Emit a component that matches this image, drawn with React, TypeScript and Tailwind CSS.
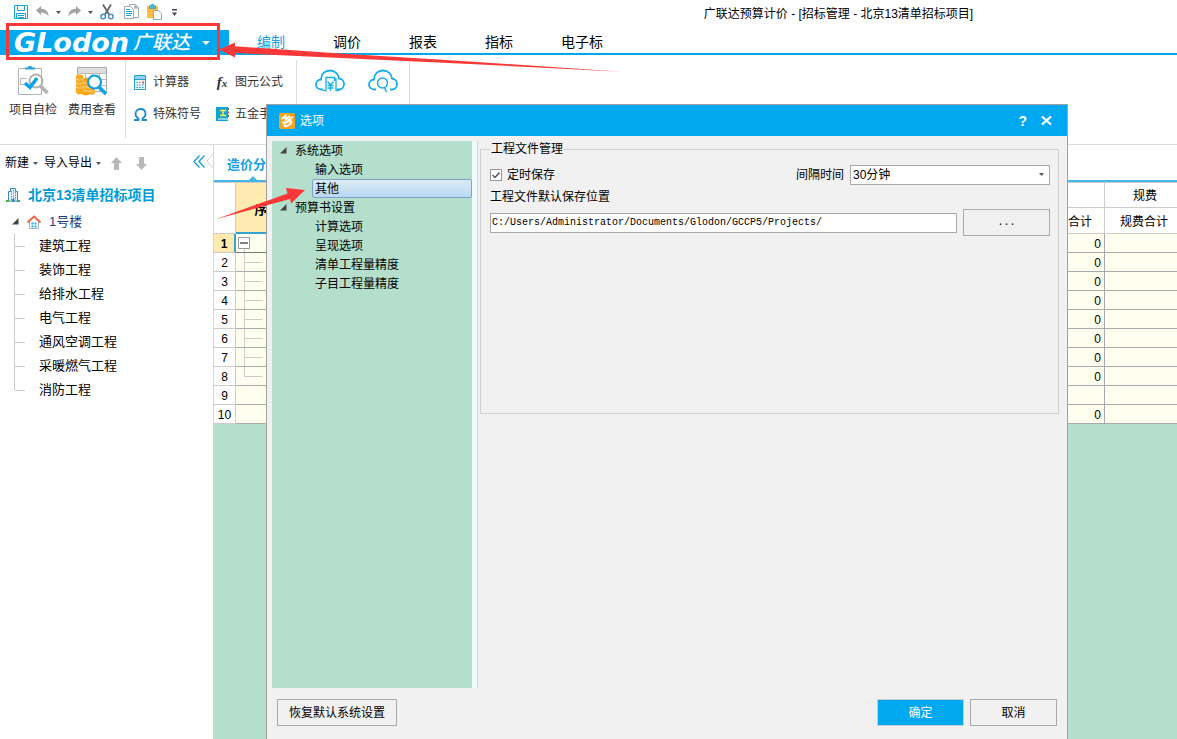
import { useState } from "react";
import type { ReactNode } from "react";
import clsx from "clsx";

const tabs = ["编制", "调价", "报表", "指标", "电子标"];

const works = [
  "建筑工程",
  "装饰工程",
  "给排水工程",
  "电气工程",
  "通风空调工程",
  "采暖燃气工程",
  "消防工程",
];

const optionGroups = [
  { title: "系统选项", items: ["输入选项", "其他"] },
  {
    title: "预算书设置",
    items: ["计算选项", "呈现选项", "清单工程量精度", "子目工程量精度"],
  },
];

const rows = ["0", "0", "0", "0", "0", "0", "0", "0", "", "0"];

function Caret({ className = "fill-[#555566]" }: { className?: string }) {
  return (
    <svg width="5" height="3" viewBox="0 0 5 3" className={className}>
      <path d="M0 0h5L2.5 3z" />
    </svg>
  );
}

function SaveIcon() {
  return (
    <svg width="14" height="14" viewBox="0 0 14 14" fill="none" stroke="#1ba3cf">
      <path d="M.5.5h13v13H.5z" />
      <path d="M3.500.5v5h7v-5M2.500 13.500V8.500h9v5M4 10.500h6M4 12.500h6" />
    </svg>
  );
}

function UndoIcon({ flip }: { flip?: boolean }) {
  return (
    <svg width="13" height="12" viewBox="0 0 13 12" className={clsx("fill-[#a3a3a3]", flip && "-scale-x-100")}>
      <path d="M0 4.500L5 0v2.700c5 0 7.500 3 7.700 8.300C11.500 8 9 6.500 5 6.500V9z" />
    </svg>
  );
}

function CutIcon() {
  return (
    <svg width="14" height="16" viewBox="0 0 14 16" fill="none">
      <path d="M3 .5l6 10M11 .5l-6 10" stroke="#666" strokeWidth="1.800" />
      <circle cx="3.200" cy="12.500" r="2.300" stroke="#4a90c4" strokeWidth="1.500" />
      <circle cx="10.800" cy="12.500" r="2.300" stroke="#4a90c4" strokeWidth="1.500" />
    </svg>
  );
}

function CopyIcon() {
  return (
    <svg width="15" height="16" viewBox="0 0 15 16" fill="#fff">
      <path d="M5.500.5h6l3 3v10h-9z" stroke="#9aa7b0" />
      <path d="M10.500.5v4h4z" fill="#9aa7b0" />
      <path d="M.5 2.500h6l3 3v9h-9z" stroke="#9aa7b0" />
      <path d="M2 5.500h4M2 7.500h6M2 9.500h6M2 11.500h5" stroke="#1ba3cf" />
    </svg>
  );
}

function PasteIcon() {
  return (
    <svg width="15" height="16" viewBox="0 0 15 16">
      <path d="M0 2h11v12H0z" fill="#fcbf3f" />
      <path d="M2.500 1.500h2V0h2v1.500h2v3h-6z" fill="#4db8d8" stroke="#2e9dc0" strokeWidth=".6" />
      <path d="M6.500 6.500h5l3 3v6h-8z" fill="#fff" stroke="#9aa7b0" />
    </svg>
  );
}

function CheckBoardIcon() {
  return (
    <svg width="32" height="32" viewBox="0 0 32 32" fill="none">
      <path d="M1.500 3.500h23v26h-23z" stroke="#b3b3b3" />
      <path d="M8 4.500V2.500h2.500C11 .5 15 .5 15.500 2.500H18v2z" fill="#25a6d0" />
      <path d="M9.500 13.500h-6v6h4" stroke="#b3b3b3" />
      <circle cx="19" cy="16" r="6.500" stroke="#b3b3b3" strokeWidth="2" />
      <path d="M23.500 21l7 7" stroke="#b3b3b3" strokeWidth="3.500" />
      <path d="M8 18l5 4.500L20 13" stroke="#0aa1e6" strokeWidth="3.500" />
    </svg>
  );
}

function CostIcon() {
  return (
    <svg width="32" height="32" viewBox="0 0 32 32" fill="none">
      <path d="M1.500 2.500h29v24h-29z" stroke="#ababab" />
      <path d="M2 3h28v5H2z" fill="#dedede" />
      <path d="M1 8.500h29M8 14.500h22M8 20.500h22M9.500 9v17M16.500 9v17M23.500 9v17" stroke="#bdbdbd" />
      <path d="M0 11c0-2 7-2 7 0v3c0-2 7-2 7 0v14c0 3-7 3-8 1-3 1-6 0-6-2z" fill="#fca91e" />
      <path d="M12 17c0-2 7-2 7 0v11c0 2-7 2-7 0z" fill="#fca91e" />
      <path d="M0 14c2 1.500 5 1.500 7 0M0 18c3 1.500 5 1.500 7 0M0 22c3 1.500 5 1.500 7 0M7 17c2 1.500 5 1.500 7 0M7 21c3 1.500 8 1.500 12 3M7 25c3 1.500 9 1.500 12 1" stroke="#fff" strokeWidth=".5" />
      <circle cx="18.500" cy="17" r="6.500" fill="#fff" stroke="#0aa1e6" strokeWidth="2.200" />
      <path d="M23 22l7 7" stroke="#0aa1e6" strokeWidth="3.500" />
    </svg>
  );
}

function CalcIcon() {
  return (
    <svg width="12" height="15" viewBox="0 0 12 15">
      <path d="M.5.5h11v14H.5z" fill="#e6f6fc" stroke="#249dcb" />
      <path d="M1 1h10v3H1z" fill="#8fd3ec" />
      <path d="M1 4.500h10" stroke="#249dcb" />
      <path d="M2.500 7.500h1.500M5 7.500h1.500M2.500 10h1.500M5 10h1.500M2.500 12.500h1.500M5 12.500h1.500M8 10h1.500M8 12.500h1.500" stroke="#249dcb" />
      <path d="M8 6.500h2v2H8z" fill="#ef5b4a" />
    </svg>
  );
}

function OmegaIcon() {
  return (
    <svg width="13" height="13" viewBox="0 0 13 13" fill="none" stroke="#1d8cc8" strokeWidth="1.800">
      <path d="M0 12h4.500v-1.500C2.500 9.500 1.500 8 1.500 6c0-3 2-5 5-5s5 2 5 5c0 2-1 3.500-3 4.500V12H13" />
    </svg>
  );
}

function BookIcon() {
  return (
    <svg width="13" height="14" viewBox="0 0 13 14">
      <path d="M0 0h12v14H0z" fill="#10a5d6" />
      <path d="M2 11.500h10v1H2z" fill="#fff" />
      <path d="M12.500 1v2M12.500 8v2" stroke="#3c7d3c" />
      <path d="M12.500 4.500v2" stroke="#e05040" />
      <path d="M4 3.500h6M7 3.500v5M4 8.500h6" stroke="#ffe640" strokeWidth="1.500" />
    </svg>
  );
}

function CloudIcon({ children }: { children: ReactNode }) {
  return (
    <svg width="30" height="24" viewBox="0 0 30 24" fill="none" stroke="#14aeea" strokeWidth="1.800">
      <path d="M8 20.500H6.500C3 20.500 1 18 1 15.500 1 12.500 3.500 10.500 6 10.500 6 5 10 1.500 15 1.500c5 0 8.500 3.500 9 8 3 .3 5 2.800 5 5.500 0 3-2 5.500-5 5.500h-2" />
      {children}
    </svg>
  );
}

function BuildingIcon() {
  return (
    <svg width="14" height="14" viewBox="0 0 14 14">
      <path d="M2.500 13V3.500h2V.5h5v3h2V13z" fill="#e8f6ff" stroke="#3b86b5" />
      <path d="M5.500 3v9M7.500 2v10M9.500 4v8" stroke="#3ba0d8" strokeDasharray="1.500 1" />
      <path d="M0 12h3v2H0zM11 12h3v2h-3z" fill="#43b049" />
      <path d="M6 11h2.500v3H6z" fill="#3b86b5" />
    </svg>
  );
}

function HouseIcon() {
  return (
    <svg width="14" height="14" viewBox="0 0 14 14" fill="none">
      <path d="M2.500 7v6.500h9V7" stroke="#a6b4bd" />
      <path d="M.5 7.500L7 1.500l6.500 6" stroke="#ef6647" strokeWidth="2" />
      <path d="M4.500 7.500h2v2h-2zM7.500 7.500h2v2h-2zM4.500 10.500h2v2h-2zM7.500 10.500h2v2h-2z" fill="#2fa8e6" />
    </svg>
  );
}

function Expander() {
  return (
    <svg width="7" height="7" viewBox="0 0 7 7" className="fill-[#444]">
      <path d="M6.500 0v6.500H0z" />
    </svg>
  );
}

function TitleBar() {
  return (
    <div className="flex h-[30px] items-start pt-1">
      <div className="flex h-4 w-[500px] items-center pl-3.5">
        <button aria-label="保存"><SaveIcon /></button>
        <button aria-label="撤销" className="ml-2"><UndoIcon /></button>
        <span className="ml-[7px]"><Caret /></span>
        <button aria-label="恢复" className="ml-[7px]"><UndoIcon flip /></button>
        <span className="ml-[7px]"><Caret /></span>
        <button aria-label="剪切" className="ml-[7px]"><CutIcon /></button>
        <button aria-label="复制" className="ml-2.5"><CopyIcon /></button>
        <button aria-label="粘贴" className="ml-2"><PasteIcon /></button>
        <button aria-label="更多" className="ml-2.5">
          <svg width="5" height="7" viewBox="0 0 5 7" className="fill-[#444455]">
            <path d="M0 0h5v1.500H0zM0 3.500h5L2.500 7z" />
          </svg>
        </button>
      </div>
      <div className="flex-1 pt-px text-center leading-[18px]">
        广联达预算计价 - [招标管理 - 北京13清单招标项目]
      </div>
    </div>
  );
}

function TabRow() {
  return (
    <div className="flex h-[25px]">
      <button className="flex w-[229px] items-center bg-[#00a8f0] pl-3.5 whitespace-nowrap text-white">
        <span className="font-['DejaVu_Sans',sans-serif] text-[27px] leading-[25px] font-bold italic">GLodon</span>
        <span className="ml-1 text-[19px] leading-[25px] font-medium italic">广联达</span>
        <svg width="8" height="4" viewBox="0 0 8 4" className="ml-3 fill-white">
          <path d="M0 0h8L4 4z" />
        </svg>
      </button>
      <nav className="flex flex-1 items-center gap-12 border-b-2 border-[#00a8e8] pl-7 text-sm leading-5">
        {tabs.map((tab, i) => (
          <a key={tab} href="#" className={clsx(i === 0 ? "text-[#14a0e0]" : "text-black")}>
            {tab}
          </a>
        ))}
      </nav>
    </div>
  );
}

function BigTool({ icon, label }: { icon: ReactNode; label: string }) {
  return (
    <button className="flex w-12 flex-col items-center gap-[5px]">
      {icon}
      {label}
    </button>
  );
}

function SmallTool({ icon, label }: { icon: ReactNode; label: string }) {
  return (
    <button className="flex h-8 items-center gap-1.5 whitespace-nowrap">
      <span className="flex w-3.5 justify-center">{icon}</span>
      {label}
    </button>
  );
}

function Ribbon() {
  return (
    <div className="flex h-[90px] border-b border-[#dcdcdc] pt-[5px] text-[#333]">
      <div className="flex h-[78px] items-start gap-[11px] border-r border-[#dcdcdc] pt-[5px] pr-[9px] pl-[9px]">
        <BigTool icon={<CheckBoardIcon />} label="项目自检" />
        <BigTool icon={<CostIcon />} label="费用查看" />
      </div>
      <div className="flex h-[78px] gap-3.5 border-r border-[#dcdcdc] pt-1.5 pr-[13px] pl-[7px]">
        <div>
          <SmallTool icon={<CalcIcon />} label="计算器" />
          <SmallTool icon={<OmegaIcon />} label="特殊符号" />
        </div>
        <div>
          <SmallTool
            icon={<i className="font-['Liberation_Serif',serif] text-[15px] leading-4 font-bold">f<span className="text-[11px]">x</span></i>}
            label="图元公式"
          />
          <SmallTool icon={<BookIcon />} label="五金手册" />
        </div>
      </div>
      <div className="flex h-[78px] items-start gap-[23px] border-r border-[#dcdcdc] pt-[9px] pr-[11px] pl-[18px]">
        <button aria-label="云计价">
          <CloudIcon>
            <path d="M8 21.500h3V8.500h8.500v3.500M19.500 10h1.500v11.500h3" strokeWidth="1.300" />
            <path d="M12.500 12.500l3 3.500 3-3.500M12.500 16.500h6M12.500 19h6M15.500 16v6" strokeWidth="1.300" />
          </CloudIcon>
        </button>
        <button aria-label="云检查">
          <CloudIcon>
            <circle cx="14.500" cy="14" r="5" fill="#fff" strokeWidth="1.500" />
            <path d="M16.500 18.500l2 4.500" strokeWidth="1.500" />
          </CloudIcon>
        </button>
      </div>
    </div>
  );
}

function Sidebar() {
  return (
    <aside className="w-[214px] shrink-0 border-r border-[#d4d4d4] text-[13px]">
      <div className="flex h-9 items-center pl-[5px] text-xs">
        <button className="flex items-center gap-1">新建 <Caret /></button>
        <button className="ml-1.5 flex items-center gap-1">导入导出 <Caret /></button>
        <button aria-label="上移" className="ml-2.5">
          <svg width="11" height="13" viewBox="0 0 11 13" className="fill-[#b9b9b9]"><path d="M5.500 0L11 6H8v7H3V6H0z" /></svg>
        </button>
        <button aria-label="下移" className="ml-3.5">
          <svg width="11" height="13" viewBox="0 0 11 13" className="fill-[#b9b9b9]"><path d="M5.500 13L0 7h3V0h5v7h3z" /></svg>
        </button>
        <button aria-label="收起" className="ml-auto flex items-center gap-px pb-1">
          <svg width="12" height="13" viewBox="0 0 12 13" fill="none" stroke="#1a9fd4" strokeWidth="1.400"><path d="M6.500.5l-5.500 6 5.500 6M11.500.5l-5.500 6 5.500 6" /></svg>
          <svg width="7" height="14" viewBox="0 0 7 14" fill="none" stroke="#d4d4d4"><path d="M7 0L1 7l6 7" /></svg>
        </button>
      </div>
      <div className="flex h-7 items-center gap-2 pl-1.5 text-sm font-bold text-[#009bd5]">
        <BuildingIcon />
        北京13清单招标项目
      </div>
      <div className="flex h-[25px] items-center pl-3 text-[#1b3f80]">
        <Expander />
        <span className="mr-2 ml-2"><HouseIcon /></span>
        1号楼
      </div>
      <ul>
        {works.map((work, i) => (
          <li key={work} className="flex h-6 items-center pl-3.5">
            <span className={clsx("w-px bg-[#ccc]", i === works.length - 1 ? "h-3 self-start" : "h-6")} />
            <span className="mr-3.5 h-px w-2.5 bg-[#ccc]" />
            {work}
          </li>
        ))}
      </ul>
    </aside>
  );
}

function CostTable() {
  return (
    <table className="w-full table-fixed border-separate border-spacing-0 text-xs">
      <colgroup>
        <col className="w-[22px]" />
        <col className="w-16" />
        <col />
        <col className="w-20" />
        <col className="w-[72px]" />
      </colgroup>
      <thead>
        <tr className="h-[25px]">
          <th rowSpan={2} className="border-r border-b border-[#ccc]" />
          <th rowSpan={2} className="border-r border-b-2 border-r-[#ccc] border-b-[#35a3d0] bg-[#ffebb0] p-0 pt-1 text-[13px]">序号</th>
          <th className="border-r border-b border-[#ccc]" />
          <th className="border-r border-b border-[#ccc]" />
          <th className="border-b border-[#ccc] p-0 pt-0.5 pl-2 font-normal">规费</th>
        </tr>
        <tr className="h-[26px]">
          <th className="border-r border-b border-[#ccc]" />
          <th className="border-r border-b border-[#ccc] p-0 pt-0.5 pr-3 text-right font-normal">合计</th>
          <th className="border-b border-[#ccc] p-0 pt-0.5 pl-1.5 font-normal whitespace-nowrap">规费合计</th>
        </tr>
      </thead>
      <tbody>
        {rows.map((value, i) => (
          <tr key={i} className="h-[19px] bg-[#fffff0] leading-4">
            <th
              className={clsx(
                "border-b border-[#ccc] p-0 pt-0.5",
                i === 0 ? "border-r-2 border-r-[#35a3d0] bg-[#ffebb0] font-bold" : "border-r bg-white font-normal",
              )}
            >
              {i + 1}
            </th>
            <td className={clsx("border-r border-b border-[#aaa] p-0", i === 0 && "border-b-[#777]")}>
              {i < 8 && (
                <svg width="30" height="18" viewBox="0 0 30 18" fill="none" className="block">
                  {i === 0 ? (
                    <>
                      <path d="M2.500 3.500h11v11h-11z" fill="#fff" stroke="#999" />
                      <path d="M4 9h8" stroke="#000" />
                      <path d="M8.500 15v3" stroke="#ccc" />
                    </>
                  ) : (
                    <path d={i === 7 ? "M8.500 0v9.500h18" : "M8.500 0v18M8.500 9.500h18"} stroke="#ccc" />
                  )}
                </svg>
              )}
            </td>
            <td className="border-r border-b border-[#aaa] p-0" />
            <td className="border-r border-b border-[#aaa] p-0 pt-0.5 pr-[3px] text-right">{value}</td>
            <td className="border-b border-[#aaa] p-0" />
          </tr>
        ))}
      </tbody>
    </table>
  );
}

function OptionsDialog() {
  const [active, setActive] = useState("其他");
  const [autoSave, setAutoSave] = useState(true);

  return (
    <div
      role="dialog"
      aria-label="选项"
      className="absolute top-[104px] right-[109px] bottom-0 left-[266px] flex flex-col border-x border-t border-[#a0a0a0] bg-[#f1f1f1]"
    >
      <div className="flex h-[31px] items-center bg-[#00a8f0] pr-[15px] pl-3 text-white">
        <svg width="16" height="16" viewBox="0 0 16 16" fill="none">
          <rect width="16" height="16" rx="2" fill="#fba31c" />
          <path d="M2.500 6L6.500 3v3.500L11 3M13 3.500c1 2-4 3-5.500 5.500 3-1 5-1.500 5 0 0 2-5 5-7.500 4M3 9.500c2-.5 3 .5 2.500 3.500" stroke="#fff" strokeWidth="1.900" />
        </svg>
        <span className="ml-[5px] flex-1">选项</span>
        <button aria-label="帮助" className="text-sm font-bold">?</button>
        <button aria-label="关闭" className="ml-3.5">
          <svg width="11" height="9" viewBox="0 0 11 9" fill="none" stroke="#fff" strokeWidth="2.200"><path d="M1 .5l9 8M10 .5l-9 8" /></svg>
        </button>
      </div>

      <div className="flex min-h-0 flex-1 pt-[5px] pr-2 pl-[5px]">
        <div className="w-[206px] shrink-0 border-r border-[#d8d8d8] bg-[#effaff] pr-[5px]">
          <div className="h-full bg-[#b5dfcd]">
            {optionGroups.map((group) => (
              <div key={group.title}>
                <div className="flex h-[19px] items-center gap-2 pl-2">
                  <Expander />
                  {group.title}
                </div>
                {group.items.map((item) => (
                  <button
                    key={item}
                    onClick={() => setActive(item)}
                    className={clsx(
                      "ml-10 flex h-[19px] w-40 items-center rounded-xs border pl-0.5",
                      active === item
                        ? "border-[#7da2ce] bg-linear-to-b from-[#dcebf5] to-[#b9d9f2]"
                        : "border-transparent",
                    )}
                  >
                    {item}
                  </button>
                ))}
              </div>
            ))}
          </div>
        </div>

        <fieldset className="ml-0.5 h-[273px] flex-1 border border-[#cfcfcf] pr-2 pl-[9px]">
          <legend className="px-px leading-4">工程文件管理</legend>
          <div className="mt-2 flex h-5 items-center">
            <label className="flex items-center gap-[5px]">
              <span className="relative flex">
                <input
                  type="checkbox"
                  checked={autoSave}
                  onChange={(e) => setAutoSave(e.target.checked)}
                  className="size-3 appearance-none border border-[#999] bg-white"
                />
                {autoSave && (
                  <svg width="12" height="12" viewBox="0 0 12 12" fill="none" stroke="#555" strokeWidth="1.500" className="pointer-events-none absolute inset-0">
                    <path d="M2.500 6l2.500 2.500L9.500 3.500" />
                  </svg>
                )}
              </span>
              定时保存
            </label>
            <label htmlFor="interval" className="mr-1.5 ml-auto">间隔时间</label>
            <span className="relative">
              <select id="interval" className="block h-5 w-[200px] appearance-none border border-[#aaa] bg-white pl-0.5 leading-4">
                <option>30分钟</option>
              </select>
              <span className="pointer-events-none absolute top-2 right-1.5 flex h-1"><Caret /></span>
            </span>
          </div>
          <label htmlFor="path" className="mt-0.5 block leading-5">工程文件默认保存位置</label>
          <div className="mt-0.5 flex items-center gap-1.5">
            <input
              id="path"
              defaultValue="C:/Users/Administrator/Documents/Glodon/GCCP5/Projects/"
              className="h-5 min-w-0 flex-1 border border-[#aaa] bg-white pl-px font-['Liberation_Mono',monospace] text-[10px]"
            />
            <button className="h-[27px] w-[87px] border border-[#aaa] font-['Liberation_Mono',monospace] text-[10px]">...</button>
          </div>
        </fieldset>
      </div>

      <div className="flex h-[51px] shrink-0 items-start gap-1.5 pt-[11px] pr-2.5 pl-2.5">
        <button className="mr-auto h-[27px] w-[120px] border border-[#aaa]">恢复默认系统设置</button>
        <button className="h-[27px] w-[87px] border border-[#ccc] bg-[#00a8f0] text-white">确定</button>
        <button className="h-[27px] w-[87px] border border-[#aaa]">取消</button>
      </div>
    </div>
  );
}

// Red box and arrows that mark the click path
function Annotations() {
  return (
    <div className="pointer-events-none absolute inset-0 overflow-hidden">
      <div className="absolute top-[23px] left-1.5 h-[37px] w-[214px] border-3 border-[#fb3838]" />
      <svg width="640" height="240" viewBox="0 0 640 240" className="absolute top-0 left-0 fill-[#fb3838]">
        <path d="M219 49.500L235 42.500v3.800L340 53.500 470 61.500 622 71.700 470 64 330 57.500 235 53v4.500z" />
        <path d="M305 190L286 188l1.500 5.500L215 219.500 290 199l1 4.500z" />
      </svg>
    </div>
  );
}

export default function App() {
  return (
    <div className="relative flex min-h-screen flex-col overflow-hidden bg-white font-['Liberation_Sans','Noto_Sans_CJK_SC',sans-serif] text-xs text-black">
      <TitleBar />
      <TabRow />
      <Ribbon />
      <div className="flex flex-1">
        <Sidebar />
        <main className="min-w-0 flex-1 bg-[#b5dfcd]">
          <div className="flex h-[38px] flex-col justify-end border-b border-[#ccc] bg-white">
            <a href="#" className="ml-[13px] w-fit text-[13px] leading-[22px] font-bold text-[#14a0e0]">造价分析</a>
            <svg width="8" height="4" viewBox="0 0 8 4" className="ml-[35px] fill-[#44b5e4]"><path d="M4 0l4 4H0z" /></svg>
            <div className="h-0.5 bg-[#44b5e4]" />
          </div>
          <div className="bg-white">
            <CostTable />
          </div>
        </main>
      </div>
      <OptionsDialog />
      <Annotations />
    </div>
  );
}
